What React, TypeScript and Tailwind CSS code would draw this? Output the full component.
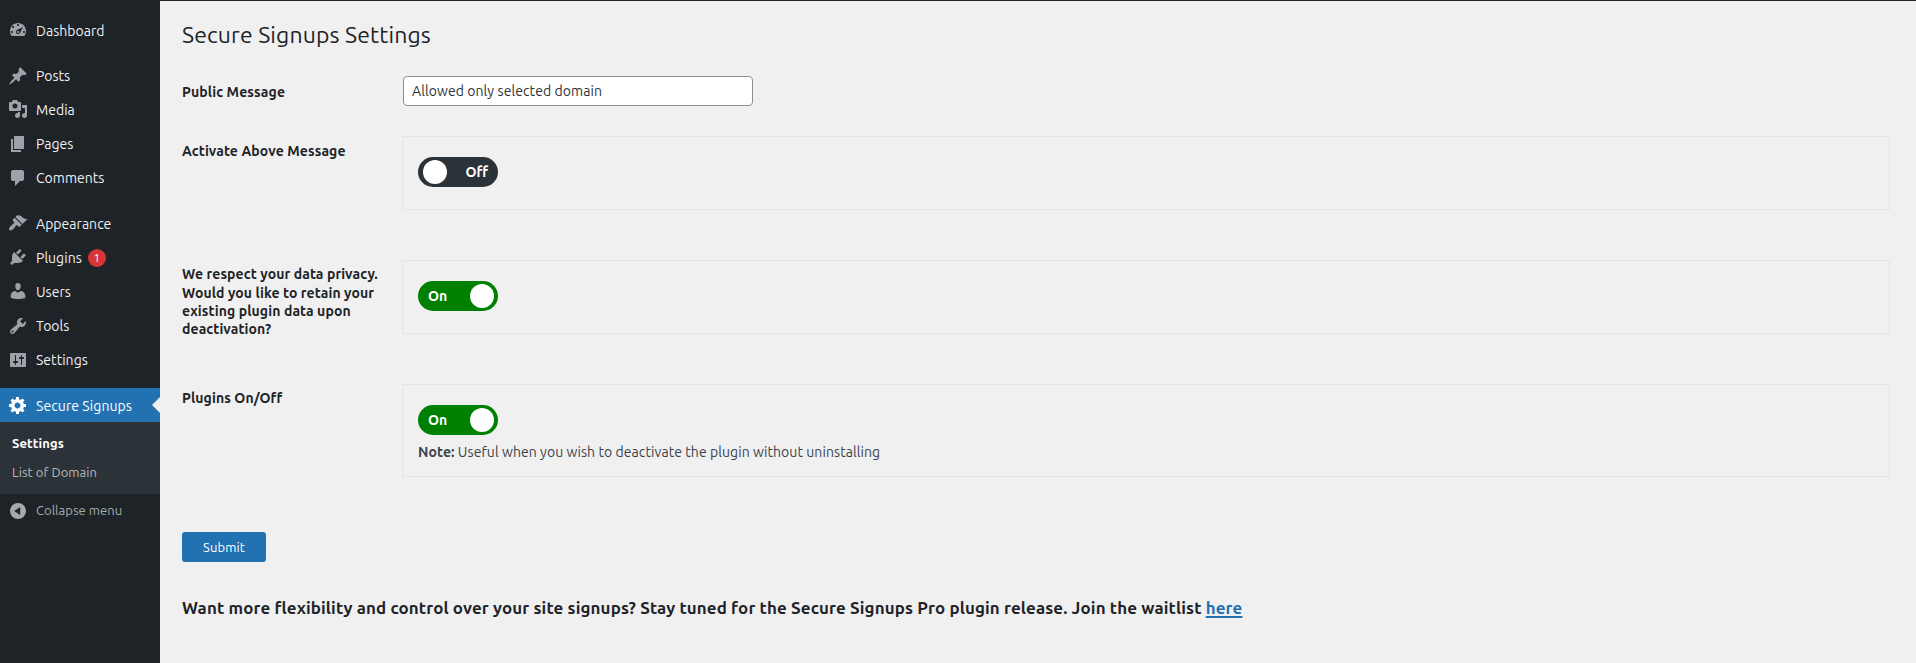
import type { ReactNode } from "react";

const ICONS = {
  dashboard:
    "M3.76 17.01h12.48C17.34 15.63 18 13.9 18 12c0-4.41-3.58-8-8-8s-8 3.59-8 8c0 1.9.66 3.63 1.76 5.01zM9 6c0-.55.45-1 1-1s1 .45 1 1c0 .56-.45 1-1 1s-1-.44-1-1zM4 8c0-.55.45-1 1-1s1 .45 1 1c0 .56-.45 1-1 1s-1-.44-1-1zM8.52 11.4c.84-.83 6.51-3.5 6.51-3.5s-2.66 5.68-3.49 6.51c-.84.84-2.18.84-3.02 0-.83-.83-.83-2.18 0-3.01zM3 13c0-.55.45-1 1-1s1 .45 1 1c0 .56-.45 1-1 1s-1-.44-1-1zM9 13c0 .55.45 1 1 1 .56 0 1-.45 1-1s-.44-1-1-1c-.55 0-1 .45-1 1zM15 13c0-.55.45-1 1-1s1 .45 1 1c0 .56-.45 1-1 1s-1-.44-1-1z",
  posts:
    "M10.44 3.02l1.82-1.82 6.36 6.35-1.83 1.82c-1.05-.68-2.48-.57-3.41.36l-.75.75c-.92.93-1.04 2.35-.35 3.41l-1.83 1.82-2.41-2.41-2.8 2.79c-.42.42-3.38 2.71-3.8 2.29s1.86-3.39 2.28-3.81l2.79-2.79L4.1 9.36l1.83-1.82c1.05.69 2.48.57 3.4-.36l.75-.75c.93-.92 1.05-2.35.36-3.41z",
  media:
    "M13 11V4c0-.55-.45-1-1-1h-1.67L9 1H5L3.67 3H2c-.55 0-1 .45-1 1v7c0 .55.45 1 1 1h10c.55 0 1-.45 1-1zM7 4.5c1.38 0 2.5 1.12 2.5 2.5S8.38 9.5 7 9.5 4.5 8.38 4.5 7 5.62 4.5 7 4.5zM14 6h5v10.5c0 1.38-1.12 2.5-2.5 2.5S14 17.88 14 16.5s1.12-2.5 2.5-2.5c.17 0 .34.02.5.05V9h-3V6zM10 14.05V13h2v3.5c0 1.38-1.12 2.5-2.5 2.5S7 17.88 7 16.5 8.12 14 9.5 14c.17 0 .34.02.5.05z",
  pages: "M6 15V2h10v13H6zM5 16h8v2H3V5h2v11z",
  comments:
    "M5 2h9c1.1 0 2 .9 2 2v7c0 1.1-.9 2-2 2h-2l-5 5v-5H5c-1.1 0-2-.9-2-2V4c0-1.1.9-2 2-2z",
  appearance:
    "M14.48 11.06L7.41 3.99l1.5-1.5c.5-.56 2.3-.47 3.51.32 1.21.8 1.43 1.28 2.91 2.1 1.18.64 2.45 1.26 4.45.85zM13.77 11.77L6.7 4.7 4.93 6.47c-.39.39-.39 1.02 0 1.41l1.06 1.06c.39.39.39 1.03 0 1.42-.6.6-1.43 1.11-2.21 1.69-.35.26-.7.53-1.01.84C1.43 14.23.4 16.08 1.4 17.07c.99 1 2.84-.03 4.18-1.36.31-.31.58-.66.85-1.02.57-.78 1.08-1.61 1.69-2.21.39-.39 1.02-.39 1.41 0l1.06 1.06c.39.39 1.02.39 1.41 0z",
  plugins:
    "M13.11 4.36L9.87 7.6 8 5.73l3.24-3.24c.35-.34 1.05-.2 1.56.32.52.51.66 1.21.31 1.55zM5.11 6.13l.91-1.12 9.01 9.01-1.19.84c-.71.71-2.63 1.16-3.82 1.16H6.14L4.9 17.26c-.59.59-1.54.59-2.12 0-.59-.58-.59-1.53 0-2.12l1.24-1.24v-3.88c0-1.13.4-3.19 1.09-3.89zM12.37 10.1l3.24-3.24c.34-.35 1.04-.21 1.55.31.52.51.66 1.21.31 1.55l-3.24 3.25z",
  users:
    "M10 9.25c-2.27 0-2.73-3.44-2.73-3.44C7 4.02 7.82 2 9.97 2c2.16 0 2.98 2.02 2.71 3.81 0 0-.41 3.44-2.68 3.44zM10 11.82L12.72 10c2.39 0 4.52 2.33 4.52 4.53v2.49s-3.65 1.13-7.24 1.13c-3.65 0-7.24-1.13-7.24-1.13v-2.49c0-2.25 1.94-4.48 4.47-4.48z",
  tools:
    "M16.68 9.77c-1.34 1.34-3.3 1.67-4.95.99l-5.41 6.52c-.99.99-2.59.99-3.58 0s-.99-2.59 0-3.57l6.52-5.42c-.68-1.65-.35-3.61.99-4.95 1.28-1.28 3.12-1.62 4.72-1.06l-2.89 2.89 2.82 2.82 2.86-2.87c.53 1.58.18 3.39-1.08 4.65zM3.81 16.21c.4.39 1.04.39 1.43 0 .4-.4.4-1.04 0-1.43-.39-.4-1.03-.4-1.43 0-.39.39-.39 1.03 0 1.43z",
  settings:
    "M18 16V4c0-.55-.45-1-1-1H3c-.55 0-1 .45-1 1v12c0 .55.45 1 1 1h14c.55 0 1-.45 1-1zM8 11h1c.55 0 1 .45 1 1s-.45 1-1 1H8v1.5c0 .28-.22.5-.5.5s-.5-.22-.5-.5V13H6c-.55 0-1-.45-1-1s.45-1 1-1h1V5.5c0-.28.22-.5.5-.5s.5.22.5.5V11zM13 9h-1c-.55 0-1-.45-1-1s.45-1 1-1h1V5.5c0-.28.22-.5.5-.5s.5.22.5.5V7h1c.55 0 1 .45 1 1s-.45 1-1 1h-1v5.5c0 .28-.22.5-.5.5s-.5-.22-.5-.5V9z",
  gear:
    "M18 12h-2.18c-.17.7-.44 1.35-.81 1.93l1.54 1.54-2.1 2.1-1.54-1.54c-.58.36-1.23.63-1.91.79V19H8v-2.18c-.68-.16-1.33-.43-1.91-.79l-1.54 1.54-2.12-2.12 1.54-1.54c-.36-.58-.63-1.23-.79-1.91H1V9.03h2.17c.16-.7.44-1.35.8-1.94L2.43 5.55l2.1-2.1 1.54 1.54c.58-.37 1.24-.64 1.93-.81V2h3v2.18c.68.16 1.33.43 1.91.79l1.54-1.54 2.12 2.12-1.54 1.54c.36.59.64 1.24.8 1.94H18V12zM9.5 13.5c1.66 0 3-1.34 3-3s-1.34-3-3-3-3 1.34-3 3 1.34 3 3 3z",
  collapse:
    "M10 2a8 8 0 1 0 0 16 8 8 0 0 0 0-16zM12.2 6v8L6.2 10z",
};

type IconName = keyof typeof ICONS;

const LIFT: Partial<Record<IconName, number>> = {
  dashboard: 2,
  media: 1,
  appearance: 1,
  plugins: 1,
  users: 1,
};

function Icon({ name }: { name: IconName }) {
  return (
    <svg viewBox={`0 ${LIFT[name] ?? 0} 20 20`} className="size-5 shrink-0 fill-current" aria-hidden="true">
      <path fillRule="evenodd" d={ICONS[name]} />
    </svg>
  );
}

function MenuItem({ icon, children }: { icon: IconName; children: ReactNode }) {
  return (
    <li>
      <a href="#" className="flex h-[34px] items-center gap-2 pl-2 text-[#9ca2a7]">
        <Icon name={icon} />
        <span className="flex items-center text-sm leading-[18px] tracking-[0.03px] text-[#f0f0f1]">{children}</span>
      </a>
    </li>
  );
}

function Sidebar() {
  return (
    <nav className="flex w-40 shrink-0 flex-col bg-[#1d2327] pt-[13px]">
      <ul>
        <MenuItem icon="dashboard">Dashboard</MenuItem>
      </ul>
      <ul className="mt-[11px]">
        <MenuItem icon="posts">Posts</MenuItem>
        <MenuItem icon="media">Media</MenuItem>
        <MenuItem icon="pages">Pages</MenuItem>
        <MenuItem icon="comments">Comments</MenuItem>
      </ul>
      <ul className="mt-3">
        <MenuItem icon="appearance">Appearance</MenuItem>
        <MenuItem icon="plugins">
          Plugins
          <span className="ml-1.5 flex size-[18px] items-center justify-center rounded-full bg-[#d63638] text-[11px] leading-none text-white">
            1
          </span>
        </MenuItem>
        <MenuItem icon="users">Users</MenuItem>
        <MenuItem icon="tools">Tools</MenuItem>
        <MenuItem icon="settings">Settings</MenuItem>
      </ul>
      <a
        href="#"
        className="relative mt-[11px] flex h-[34px] items-center gap-2 bg-[#2271b1] pl-2 text-sm tracking-[0.08px] text-white"
      >
        <Icon name="gear" />
        <span className="pt-px">Secure Signups</span>
        <span className="absolute top-[9px] right-0 border-y-8 border-r-8 border-y-transparent border-r-[#f0f0f1]" />
      </a>
      <ul className="flex h-[72px] flex-col bg-[#2c3338] pt-[7px] pl-3 text-[13px]">
        <li className="flex h-[29px] items-center font-semibold tracking-[0.11px] text-white">Settings</li>
        <li className="flex h-[29px] items-center tracking-[0.05px] text-[#b4b7b9]">List of Domain</li>
      </ul>
      <a href="#" className="flex h-[34px] items-center gap-2 pl-2 text-[13px] tracking-[0.04px] text-[#a7aaad]">
        <Icon name="collapse" />
        Collapse menu
      </a>
    </nav>
  );
}

function Toggle({ on = false }: { on?: boolean }) {
  return on ? (
    <button className="flex h-[30px] w-20 items-center justify-between rounded-full bg-[#008000] pr-1 pl-2.5 text-sm font-semibold text-white">
      On
      <span className="size-6 rounded-full bg-white" />
    </button>
  ) : (
    <button className="flex h-[30px] w-20 items-center justify-between rounded-full bg-[#2c3338] pr-2.5 pl-[5px] text-sm font-semibold text-white">
      <span className="size-6 rounded-full bg-white" />
      Off
    </button>
  );
}

function Row({ label, size, children }: { label: string; size: string; children: ReactNode }) {
  return (
    <div className={`flex ${size}`}>
      <div className="w-[220px] shrink-0 pr-5 text-sm leading-[18.2px] font-semibold tracking-[0.1px] text-[#1d2327]">
        {label}
      </div>
      <div className="-mt-(--label-inset) h-(--box-height) flex-1 border border-[#e4e4e4] px-[15px] pt-5">
        {children}
      </div>
    </div>
  );
}

export default function App() {
  return (
    <div className="flex h-[663px] w-full flex-col overflow-hidden bg-[#f0f0f1] font-['Ubuntu','Noto_Sans',sans-serif]">
      <div className="h-px bg-[#1d2327]" />
      <div className="flex flex-1">
        <Sidebar />
        <main className="flex-1 pt-[19px] pr-[26px] pl-[22px]">
          <h1 className="text-[23px] leading-[30px] tracking-[0.135px] text-[#1d2327]">Secure Signups Settings</h1>
          <div className="mt-[26px] flex">
            <label
              htmlFor="message"
              className="w-[221px] shrink-0 pt-[7px] text-sm leading-[18.2px] font-semibold tracking-[0.12px] text-[#1d2327]"
            >
              Public Message
            </label>
            <input
              id="message"
              defaultValue="Allowed only selected domain"
              className="h-[30px] w-[350px] rounded border border-[#8c8f94] bg-white px-2 text-sm tracking-[0.085px] text-[#2c3338]"
            />
          </div>
          <div className="mt-[30px] flex flex-col">
            <Row
              label="Activate Above Message"
              size="h-[124px] pt-1.5 [--box-height:74px] [--label-inset:6px]"
            >
              <Toggle />
            </Row>
            <Row
              label="We respect your data privacy. Would you like to retain your existing plugin data upon deactivation?"
              size="h-[124px] pt-[5.4px] [--box-height:74px] [--label-inset:5.4px]"
            >
              <Toggle on />
            </Row>
            <Row label="Plugins On/Off" size="h-[93px] pt-[5px] [--box-height:93px] [--label-inset:5px]">
              <Toggle on />
              <p className="pt-2 text-sm leading-[19px] tracking-[0.075px] text-[#3c434a]">
                <strong className="font-semibold">Note:</strong> Useful when you wish to deactivate the plugin without
                uninstalling
              </p>
            </Row>
          </div>
          <button className="mt-[55px] block h-[30px] w-[84px] rounded-[3px] bg-[#2271b1] pt-0.5 text-[13px] tracking-[0.11px] text-white">
            Submit
          </button>
          <h3 className="mt-[35px] text-[16.9px] leading-[22px] font-semibold tracking-[0.134px] text-[#1d2327]">
            Want more flexibility and control over your site signups? Stay tuned for the Secure Signups Pro plugin
            release. Join the waitlist{" "}
            <a href="#" className="text-[#2271b1] underline decoration-2 underline-offset-2">
              here
            </a>
          </h3>
        </main>
      </div>
    </div>
  );
}
